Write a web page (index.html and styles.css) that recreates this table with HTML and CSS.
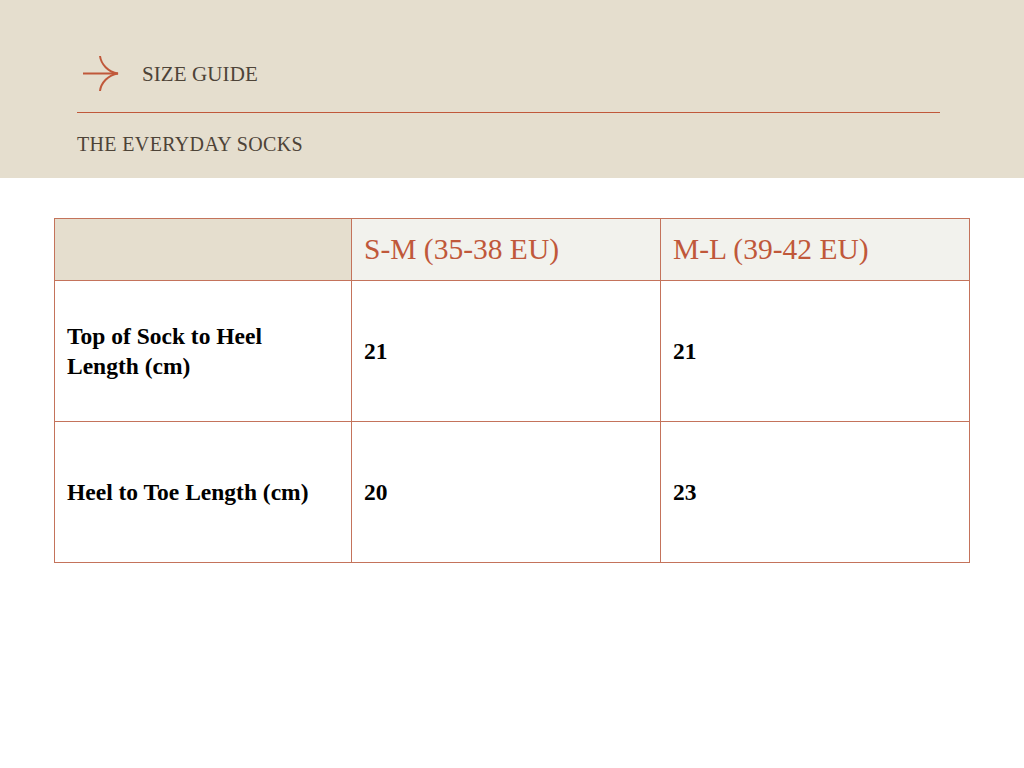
FILE: index.html
```html
<!DOCTYPE html>
<html>
<head>
<meta charset="utf-8">
<link rel="stylesheet" href="styles.css">
</head>
<body>
<header class="hero">
  <div class="hero-top">
    <svg class="arrow" width="38" height="38" viewBox="0 0 38 38">
      <path d="M1 18.5 H36" fill="none" stroke="#c0583a" stroke-width="2"/>
      <path d="M18 1 C19 9 26 17 36 18.5 C26 20 19 28 18 36" fill="none" stroke="#c0583a" stroke-width="2"/>
    </svg>
    <span class="title">SIZE GUIDE</span>
  </div>
  <div class="rule"></div>
  <div class="subtitle">THE EVERYDAY SOCKS</div>
</header>
<main class="content">
  <table class="sizes">
    <colgroup>
      <col class="c1"><col class="c2"><col class="c3">
    </colgroup>
    <thead>
      <tr>
        <th class="corner"></th>
        <th>S-M (35-38 EU)</th>
        <th>M-L (39-42 EU)</th>
      </tr>
    </thead>
    <tbody>
      <tr>
        <td><span class="label">Top of Sock to Heel Length (cm)</span></td>
        <td>21</td>
        <td>21</td>
      </tr>
      <tr>
        <td><span class="label">Heel to Toe Length (cm)</span></td>
        <td>20</td>
        <td>23</td>
      </tr>
    </tbody>
  </table>
</main>
</body>
</html>
```

FILE: styles.css
```css
html, body {
  margin: 0;
  padding: 0;
  background: #ffffff;
  font-family: "Liberation Serif", "Times New Roman", serif;
}

.hero {
  background: #e5dece;
  height: 178px;
  box-sizing: border-box;
  padding: 55px 84px 0 77px;
}

.hero-top {
  display: flex;
  align-items: center;
  height: 38px;
  gap: 22px;
}

.arrow {
  margin-left: 5px;
  display: block;
}

.title {
  font-size: 21px;
  color: #4d4337;
  letter-spacing: 0.1px;
}

.rule {
  margin-top: 19px;
  height: 1px;
  background: #c0583a;
}

.subtitle {
  margin-top: 20px;
  font-size: 20px;
  color: #4d4337;
  letter-spacing: 0.35px;
}

.content {
  padding: 40px 0 0 54px;
}

.sizes {
  border-collapse: collapse;
  width: 915px;
  table-layout: fixed;
}

.c1 { width: 297px; }
.c2 { width: 309px; }
.c3 { width: 309px; }

.sizes th,
.sizes td {
  border: 1px solid #c4735b;
  text-align: left;
  vertical-align: middle;
  padding: 0 12px;
}

.sizes th {
  height: 61px;
  background: #f2f2ed;
  font-weight: normal;
  font-size: 29.5px;
  color: #c0583a;
}

.sizes th.corner {
  background: #e5dece;
}

.sizes td {
  height: 140px;
  font-size: 23.5px;
  font-weight: bold;
  line-height: 30px;
  color: #000;
}

.label {
  display: block;
  max-width: 258px;
}
```
